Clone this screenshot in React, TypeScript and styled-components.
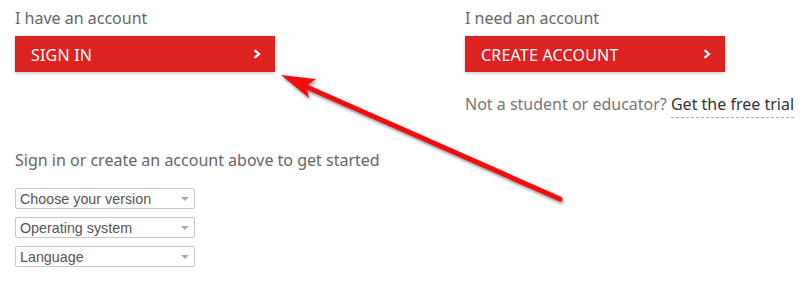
import React from "react";
import styled, { createGlobalStyle } from "styled-components";

const Global = createGlobalStyle`
  html, body { margin: 0; padding: 0; background: #fff; }
  body { font-family: "Noto Sans", "Open Sans", sans-serif; }
`;

const Page = styled.div`
  position: relative;
  width: 808px;
  height: 298px;
  padding: 8px 0 0 15px;
  box-sizing: border-box;
  overflow: hidden;
`;

const TopRow = styled.div`
  display: flex;
  align-items: flex-start;
`;

const Column = styled.div<{ $width?: number }>`
  flex: none;
  width: ${(p) => (p.$width ? `${p.$width}px` : "auto")};
  display: flex;
  flex-direction: column;
  align-items: flex-start;
`;

const Label = styled.div`
  font-size: 16px;
  line-height: 20px;
  color: #666;
`;

const RedButton = styled.button`
  margin-top: 8px;
  width: 260px;
  height: 36px;
  border: none;
  background: #dd2222;
  color: #fff;
  display: flex;
  align-items: center;
  justify-content: space-between;
  padding: 2px 14px 0 16px;
  box-sizing: border-box;
  font-family: "Noto Sans", "Open Sans", sans-serif;
  font-size: 16px;
  letter-spacing: 0.2px;
  box-shadow: 0 1px 3px rgba(0, 0, 0, 0.25);
  cursor: pointer;
`;

const Chevron = styled.svg`
  width: 8px;
  height: 10px;
  margin-top: -2px;
`;

const Note = styled.div`
  margin-top: 22px;
  font-size: 16px;
  line-height: 20px;
  color: #777;
  white-space: nowrap;
`;

const TrialLink = styled.a`
  color: #333;
  text-decoration: none;
  padding-bottom: 2px;
  border-bottom: 1px dashed #aaa;
`;

const StartTitle = styled.div`
  margin-top: 36px;
  font-size: 16px;
  line-height: 20px;
  color: #666;
`;

const SelectList = styled.div`
  margin-top: 18px;
  display: flex;
  flex-direction: column;
  gap: 8px;
`;

const SelectBox = styled.div`
  width: 180px;
  height: 21px;
  box-sizing: border-box;
  border: 1px solid #c8c8c8;
  border-radius: 2px;
  display: flex;
  align-items: center;
  justify-content: space-between;
  padding: 0 5px 0 4px;
  font-family: "Liberation Sans", Arial, sans-serif;
  font-size: 14.3px;
  color: #555;
`;

const Caret = styled.span`
  width: 0;
  height: 0;
  border-left: 4px solid transparent;
  border-right: 4px solid transparent;
  border-top: 4px solid #aaa;
`;

const Annotation = styled.svg`
  position: absolute;
  left: 0;
  top: 0;
  pointer-events: none;
`;

const Arrow = () => (
  <Chevron viewBox="0 0 8 10">
    <path d="M1.5 1.2 L6 5 L1.5 8.8" fill="none" stroke="#fff" strokeWidth="2.2" />
  </Chevron>
);

export default function App() {
  return (
    <Page>
      <Global />
      <TopRow>
        <Column $width={450}>
          <Label>I have an account</Label>
          <RedButton>
            <span>SIGN IN</span>
            <Arrow />
          </RedButton>
        </Column>
        <Column>
          <Label>I need an account</Label>
          <RedButton>
            <span>CREATE ACCOUNT</span>
            <Arrow />
          </RedButton>
          <Note>
            Not a student or educator? <TrialLink>Get the free trial</TrialLink>
          </Note>
        </Column>
      </TopRow>
      <StartTitle>Sign in or create an account above to get started</StartTitle>
      <SelectList>
        {["Choose your version", "Operating system", "Language"].map((t) => (
          <SelectBox key={t}>
            <span>{t}</span>
            <Caret />
          </SelectBox>
        ))}
      </SelectList>
      <Annotation width="808" height="298" viewBox="0 0 808 298">
        <defs>
          <filter id="sh" x="-10%" y="-10%" width="130%" height="140%">
            <feDropShadow dx="1" dy="2" stdDeviation="1.6" floodColor="#000" floodOpacity="0.45" />
          </filter>
        </defs>
        <g filter="url(#sh)">
          <line x1="560" y1="199" x2="300" y2="84" stroke="#f01010" strokeWidth="5" strokeLinecap="round" />
          <polygon points="281,75 316,79 306,86 309,98" fill="#f01010" />
        </g>
      </Annotation>
    </Page>
  );
}
